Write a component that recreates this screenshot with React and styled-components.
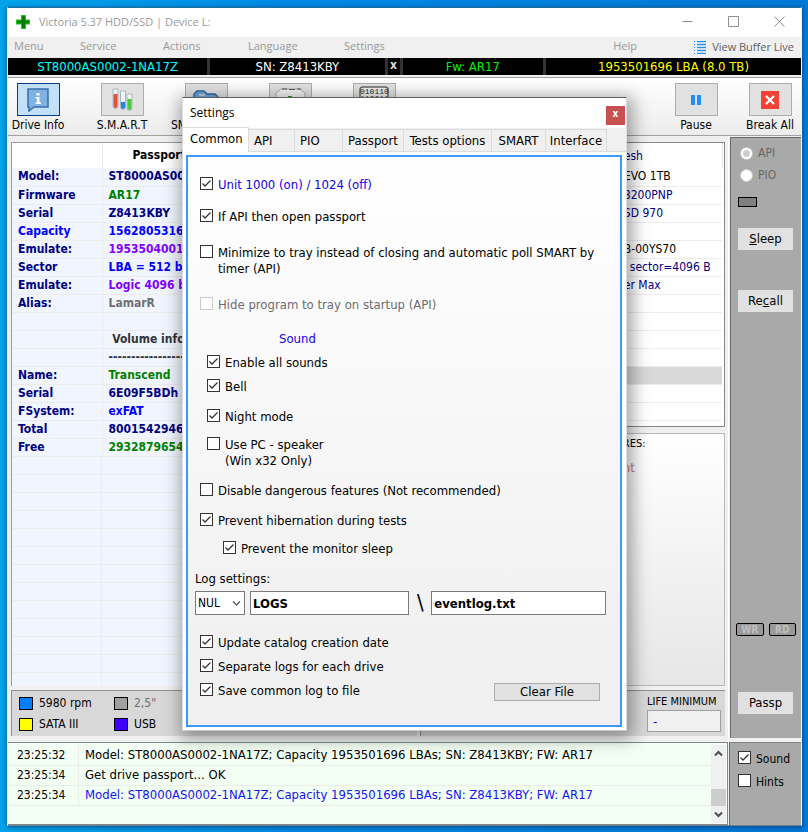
import React from 'react';
import styled, { createGlobalStyle } from 'styled-components';

const tahoma = '"DejaVu Sans Condensed", "DejaVu Sans", sans-serif';
const segoe = '"Open Sans", "Noto Sans", sans-serif';

const GlobalStyle = createGlobalStyle`
  * { box-sizing: border-box; }
  body { margin: 0; font: 13px/16px ${tahoma}; color: #000; }
  button, input, select { font: inherit; color: inherit; margin: 0; border-radius: 0; }
  table { border-collapse: collapse; }
`;

const Desktop = styled.div`
  min-height: 100vh;
  display: flex;
  padding: 7px 6px 6px 7px;
  background: linear-gradient(90deg, #00a4ea, #008be6 35%, #0078d7);
`;

const Window = styled.main`
  position: relative;
  flex: 1;
  min-width: 0;
  display: flex;
  flex-direction: column;
  background: #f0f0f0;
  border-top: 1px solid #1f6d9e;
  border-right: 1px solid #f4f4f4;
  border-bottom: 1px solid #70808a;
  border-left: 1px solid #f4f4f4;
  box-shadow: 0 1px 5px rgba(0, 30, 70, 0.6);
`;

/* title bar and menus */

const TitleBar = styled.header`
  display: flex;
  align-items: center;
  height: 29px;
  padding: 0 2px 2px 8px;
  background: #fff;
`;

const AppTitle = styled.h1`
  flex: 1;
  margin: 0 0 0 9px;
  font: 11px/16px ${segoe};
  color: #999;
`;

const WindowButtons = styled.div`
  display: flex;
  gap: 6px;
`;

const WindowButton = styled.button`
  display: grid;
  place-items: center;
  width: 40px;
  height: 27px;
  padding: 0;
  border: 0;
  background: transparent;
  color: #8f8f8f;
`;

const MenuBar = styled.nav`
  display: flex;
  align-items: center;
  height: 21px;
  padding: 0 7px 0 6px;
  font-family: ${segoe};
  font-size: 11px;
  color: #999;
`;

const MenuItem = styled.button`
  width: ${(p) => p.$width || 'auto'};
  padding: 0 0 4px;
  border: 0;
  background: transparent;
  text-align: left;
  white-space: nowrap;
`;

const MenuSpacer = styled.span`
  flex: 1;
`;

const BufferLink = styled.button`
  display: flex;
  align-items: center;
  gap: 6px;
  padding: 0 0 1px;
  border: 0;
  background: transparent;
  color: #606060;
  white-space: nowrap;
`;

const DriveStrip = styled.div`
  display: grid;
  grid-template-columns:
    minmax(0, 200fr) minmax(0, 175fr) 12px minmax(0, 141fr) minmax(0, 256fr);
  gap: 3px;
  height: 17px;
  background: #333;
`;

const DriveCell = styled.div`
  background: #000;
  color: ${(p) => p.$color};
  font-size: 13px;
  line-height: 17px;
  text-align: center;
  white-space: nowrap;
`;

const StripClose = styled.button`
  padding: 0 0 2px;
  border: 0;
  background: #000;
  color: #ddd;
  font-weight: bold;
  font-size: 12px;
  line-height: 15px;
`;

/* toolbar */

const Toolbar = styled.div`
  display: flex;
  align-items: flex-start;
  gap: 24px;
  height: 59px;
  margin-top: 2px;
  padding: 5px 1px 0 0;
  border-top: 1px solid #a0a0a0;
  border-bottom: 1px solid #a0a0a0;
  background: linear-gradient(#fff, #ececec);
`;

const ToolPair = styled.div`
  display: flex;
  gap: 14px;
  margin-left: auto;
`;

const Tool = styled.button`
  display: flex;
  flex-direction: column;
  align-items: center;
  gap: 1px;
  width: 60px;
  padding: 0;
  border: 0;
  background: transparent;
  font-size: 12px;
  white-space: nowrap;
`;

const ToolLabel = styled.span`
  width: ${(p) => (p.$start ? '70px' : 'auto')};
  text-align: left;
`;

const ToolFace = styled.span`
  display: grid;
  place-items: center;
  width: 43px;
  height: 33px;
  border: 1px solid ${(p) => (p.$active ? '#003f8a' : '#adadad')};
  background: ${(p) => (p.$active ? '#c2e0f7' : '#e1e1e1')};
`;

/* main area */

const Body = styled.div`
  flex: 1;
  display: flex;
  gap: 1px;
`;

const Main = styled.section`
  flex: 1;
  min-width: 0;
  display: flex;
  flex-direction: column;
  gap: 4px;
  padding: 6px 3px 3px;
  border-right: 1px solid #fff;
`;

const Columns = styled.div`
  flex: 1;
  display: grid;
  grid-template-columns: 410fr 303fr;
  gap: 3px;
`;

const RightColumn = styled.div`
  display: flex;
  flex-direction: column;
  gap: 6px;
  min-width: 0;
`;

const PassportPane = styled.div`
  display: flex;
  flex-direction: column;
  min-width: 0;
  overflow: hidden;
  border: 1px solid #9a9aa0;
  border-bottom: 0;
  background: #f0f5ff;
`;

const PassportTable = styled.table`
  width: 100%;
  table-layout: fixed;
  font-weight: bold;
  font-size: 12px;
  line-height: 17px;
  white-space: nowrap;

  col:first-child { width: 90px; }
  th, td { padding: 0 0 0 6px; border-right: 1px solid #ececec; text-align: left; overflow: hidden; }
  thead th { height: 25px; background: #fff; }
  thead th + th { padding-left: 30px; }
  tbody th, tbody td { height: 18px; border-bottom: 1px solid #ececec; }
`;

const Label = styled.th`
  color: ${(p) => p.$color || '#000080'};
`;

const Value = styled.td`
  color: ${(p) => p.$color};
`;

const EmptyRows = styled.div`
  flex: 1;
  background:
    linear-gradient(90deg, transparent 89px, #ececec 89px, #ececec 90px, transparent 90px),
    repeating-linear-gradient(transparent 0 17px, #ececec 17px 18px);
`;

const DrivePane = styled.div`
  overflow: hidden;
  padding-right: 1px;
  border: 1px solid #828790;
  background: #fff;
`;

const DriveTable = styled.table`
  width: 100%;
  table-layout: fixed;
  margin-bottom: 5px;
  line-height: 17px;
  font-size: 12px;
  white-space: nowrap;

  th { height: 25px; padding: 2px 0 0 200px; border-right: 1px solid #e5e5e5; color: #000080; font-weight: normal; text-align: left; }
`;

const DriveRow = styled.td`
  height: 18px;
  padding: 0 0 0 ${(p) => (p.$indent ? 206 : 200)}px;
  border-bottom: 1px solid #ececec;
  background: ${(p) => (p.$marked ? '#d9d9d9' : 'transparent')};
  color: ${(p) => (p.$dark ? '#000' : '#000080')};
`;

const FeaturePane = styled.div`
  flex: 1;
  padding: 2px 0 0 199px;
  border: 1px solid #b8b8b8;
  background: linear-gradient(#fff, #e6e6e6);
  font-size: 11px;
`;

const FeatureNote = styled.p`
  margin: 8px 0 0;
  color: #c87878;
  font-size: 13px;
`;

const Panels = styled.div`
  display: grid;
  grid-template-columns: 407fr 306fr;
  gap: 3px;
  height: 46px;
`;

const Panel = styled.div`
  display: flex;
  justify-content: ${(p) => (p.$end ? 'flex-end' : 'flex-start')};
  padding: 4px 4px 0 7px;
  border-top: 1px solid #909090;
  border-left: 1px solid #909090;
  background: #d8d8d8;
`;

const Legend = styled.ul`
  display: grid;
  grid-template-columns: 95px 95px;
  grid-auto-rows: 16px;
  row-gap: 5px;
  margin: 0;
  padding: 0;
  list-style: none;
  font-size: 12px;
`;

const LegendItem = styled.li`
  display: flex;
  align-items: center;
  gap: 6px;
  color: ${(p) => (p.$muted ? '#707070' : '#000')};
  white-space: nowrap;
`;

const Swatch = styled.span`
  width: 14px;
  height: 13px;
  border: 1px solid #000;
  background: ${(p) => p.$color};
`;

const LifeField = styled.label`
  display: flex;
  flex-direction: column;
  gap: 2px;
  padding-top: 1px;
  font-size: 11px;
  line-height: 12px;
`;

const LifeInput = styled.input`
  width: 74px;
  height: 22px;
  padding: 0 5px;
  border: 1px solid #a0a0a0;
  background: #f0f0f0;
  color: #0000e0;
  font-size: 13px;
`;

/* side panel */

const Side = styled.aside`
  display: flex;
  flex-direction: column;
  width: 71px;
  margin: 1px 0;
  padding: 7px 7px 24px;
  border-top: 1px solid #696969;
  border-left: 1px solid #696969;
  background: #a9a9a9;
  font-size: 13px;
`;

const RadioLabel = styled.label`
  display: flex;
  align-items: center;
  gap: 5px;
  margin: 0 0 6px 2px;
  color: #686868;
  font-size: 12px;
`;

const Radio = styled.input`
  appearance: none;
  width: 13px;
  height: 13px;
  border: 1px solid #ccc;
  border-radius: 50%;
  background: #fff;

  &:checked { background: radial-gradient(#ccc 0 3px, #fff 4px); }
`;

const Lamp = styled.span`
  width: 19px;
  height: 10px;
  margin: 8px 0 21px;
  border: 1px solid #000;
  background: #808080;
`;

const SideButton = styled.button`
  width: 55px;
  height: 22px;
  padding: 0;
  margin-bottom: ${(p) => p.$below || 0}px;
  border: 0;
  background: #e1e1e1;
`;

const Indicators = styled.div`
  display: flex;
  gap: 5px;
  margin: auto -2px 56px;
`;

const Indicator = styled.span`
  flex: 1;
  height: 13px;
  border: 1px solid #000;
  border-radius: 2px;
  background: #999;
  color: #c0c0c0;
  font-size: 10px;
  font-weight: bold;
  line-height: 11px;
  text-align: center;
`;

/* log */

const LogArea = styled.footer`
  display: flex;
  gap: 1px;
  height: 83px;
  margin-top: 3px;
`;

const LogPane = styled.div`
  flex: 1;
  min-width: 0;
  display: flex;
  padding: 2px 1px 1px 0;
  border: 1px solid #828790;
  border-left: 0;
  background: #f3fff3;
`;

const LogTable = styled.table`
  flex: 1;
  display: block;
  overflow: hidden;
  white-space: nowrap;

  tbody { display: block; }
`;

const LogRow = styled.tr`
  display: grid;
  grid-template-columns: 71px 1fr;
  height: 20px;
  line-height: 20px;

  td { padding: 0 0 0 6px; border-bottom: 1px solid #e8efe8; }
  td:first-child { padding-left: 9px; border-right: 1px solid #e8efe8; font-size: 12px; }
  td:last-child { color: ${(p) => (p.$link ? '#1414f0' : '#000')}; }
`;

const ScrollBar = styled.div`
  display: flex;
  flex-direction: column;
  width: 15px;
  background: #f0f0f0;
`;

const ScrollButton = styled.button`
  display: grid;
  place-items: center;
  height: 17px;
  padding: 0;
  border: 0;
  background: transparent;
  color: #505050;
`;

const ScrollThumb = styled.span`
  height: 17px;
  margin-top: auto;
  background: #cdcdcd;
`;

const LogSide = styled.div`
  display: flex;
  flex-direction: column;
  gap: 7px;
  width: 72px;
  padding: 8px 8px 0;
  border-top: 1px solid #808080;
  border-left: 1px solid #696969;
  background: #a9a9a9;
  font-size: 12px;
`;

/* settings dialog */

const Overlay = styled.div`
  position: absolute;
  inset: 89px 0 auto;
  display: flex;
  justify-content: center;
`;

const Dialog = styled.section`
  width: 445px;
  max-width: 100%;
  padding-bottom: 3px;
  border-top: 1px solid #606060;
  border-right: 1px solid #dcdcdc;
  border-bottom: 1px solid #c8c8c8;
  border-left: 1px solid #dcdcdc;
  background: #fff;
  box-shadow: 2px 4px 16px 4px rgba(0, 0, 0, 0.35);
`;

const DialogTitle = styled.header`
  display: flex;
  justify-content: space-between;
  align-items: center;
  height: 30px;
  padding-left: 7px;
`;

const DialogHeading = styled.h2`
  margin: 0;
  font: 12px/16px ${segoe};
`;

const DialogClose = styled.button`
  width: 19px;
  height: 19px;
  margin: 4px 1px 0 0;
  padding: 0 0 2px;
  border: 0;
  background: #c75050;
  color: #fff;
  font-size: 10px;
  font-weight: bold;
  line-height: 14px;
`;

const Tabs = styled.div`
  display: flex;
  align-items: flex-end;
  height: 24px;
  background: #f0f0f0;
  border-bottom: 1px solid #dcdcdc;
  font-size: 13px;
`;

const Tab = styled.button`
  width: ${(p) => p.$width}px;
  height: ${(p) => (p.$active ? 25 : 22)}px;
  margin-bottom: ${(p) => (p.$active ? -1 : 0)}px;
  padding: ${(p) => (p.$active ? '0 0 2px 7px' : p.$center ? '0' : '0 0 0 5px')};
  border: 0;
  border-top: 1px solid #dcdcdc;
  border-right: 1px solid #dcdcdc;
  background: ${(p) => (p.$active ? '#fff' : '#f0f0f0')};
  text-align: ${(p) => (p.$center ? 'center' : 'left')};
  white-space: nowrap;
`;

const TabPage = styled.form`
  display: flex;
  flex-direction: column;
  margin: 3px 4px 0 3px;
  padding: 20px 14px 24px 7px;
  border: 2px solid #3b99fc;
  background: linear-gradient(#fff, #f0f0f0 90%);
`;

const CheckRow = styled.label`
  display: flex;
  align-items: flex-start;
  gap: 5px;
  margin-left: ${(p) => p.$indent ?? 5}px;
  margin-bottom: ${(p) => p.$below ?? 8}px;
  color: ${(p) => p.$color || '#000'};
`;

const BoxCell = styled.span`
  display: grid;
  flex: none;
`;

const BoxInput = styled.input`
  appearance: none;
  grid-area: 1 / 1;
  width: 13px;
  height: 13px;
  border: 1px solid #333;
  background: #fff;

  &:disabled { border-color: #ccc; }
  & + svg { grid-area: 1 / 1; visibility: hidden; pointer-events: none; }
  &:checked + svg { visibility: visible; }
`;

const GroupTitle = styled.h3`
  margin: 0 0 8px 84px;
  font: 13px/16px ${tahoma};
  color: #1200e6;
`;

const FieldLabel = styled.label`
  margin-bottom: 4px;
`;

const PathRow = styled.div`
  display: flex;
  align-items: center;
  height: 24px;
  margin-bottom: 20px;
`;

const SelectCell = styled.span`
  display: grid;
  align-items: center;
  width: 50px;
  margin-right: 5px;

  svg { grid-area: 1 / 1; justify-self: end; margin-right: 4px; pointer-events: none; }
`;

const Select = styled.select`
  appearance: none;
  grid-area: 1 / 1;
  width: 100%;
  height: 24px;
  padding: 0 2px;
  border: 1px solid #7a7a7a;
  background: #fff;
  font-size: 12px;
`;

const PathInput = styled.input`
  flex: ${(p) => p.$grow} 1 0;
  min-width: 0;
  height: 24px;
  padding: 0 2px;
  border: 1px solid #7a7a7a;
  background: #fff;
  font-weight: bold;
`;

const Slash = styled.span`
  width: 22px;
  text-align: center;
  font-size: 22px;
  line-height: 24px;
`;

const LastRow = styled.div`
  display: flex;
  justify-content: space-between;
`;

const ClearButton = styled.button`
  width: 106px;
  height: 18px;
  margin-right: 6px;
  padding: 0;
  border: 1px solid #adadad;
  background: #e1e1e1;
  line-height: 16px;
`;

/* drawings */

const CheckMark = () => (
  <svg width="13" height="13" viewBox="0 0 13 13" fill="none" stroke="#333" strokeWidth="1.3">
    <path d="M2.5 6.5 5 9 10.5 3.5" />
  </svg>
);

const Chevron = ({ up, size = 9, weight = 1.2 }) => (
  <svg width={size} height={size} viewBox="0 0 9 9" fill="none" stroke="#505050" strokeWidth={weight}>
    <path d={up ? 'M1 6.5 4.5 3 8 6.5' : 'M1 2.5 4.5 6 8 2.5'} />
  </svg>
);

const CrossLogo = () => (
  <svg width="14" height="14" viewBox="0 0 14 14">
    <path d="M5 0h5v4.500h4v5h-4V14H5V9.500H0v-5h5z" fill="#22c322" />
    <path d="M6 1h3v4.500h4v3H9V13H6V8.500H1v-3h5z" fill="#087a08" />
  </svg>
);

const ListIcon = () => (
  <svg width="12" height="13" viewBox="0 0 12 13" stroke="#1e90f0" strokeWidth="1">
    <path d="M0 .5h1M0 3.500h1M0 6.500h1M0 9.500h1M0 12.500h1M3 .5h9M3 3.500h9M3 6.500h9M3 9.500h9M3 12.500h9" />
    <path d="M3 2h9M3 5h9M3 8h9M3 11h9" opacity=".35" />
  </svg>
);

const InfoIcon = () => (
  <svg width="23" height="24" viewBox="0 0 23 24">
    <path d="M1 1h20v18H7l-5 4v-4H1z" fill="#7fb2e5" stroke="#3a6ea8" strokeWidth="1.500" />
    <path d="M9.500 5h3v2.500h-3zM8.500 9h4v5.500h1.500V16H8.500v-1.500H10v-4H8.500z" fill="#fff" />
  </svg>
);

const TubesIcon = () => (
  <svg width="23" height="24" viewBox="0 0 23 24" stroke="#aab4c0" strokeWidth="1">
    <path d="M2 1h5v17a2.500 2.500 0 0 1-5 0z" fill="#f4f6f8" />
    <path d="M2.500 6h4v12a2 2 0 0 1-4 0z" fill="#e2503a" stroke="none" />
    <path d="M9.500 3h5v16a2.500 2.500 0 0 1-5 0z" fill="#eef5fa" />
    <path d="M10 14h4v5a2 2 0 0 1-4 0z" fill="#2a86dc" stroke="none" />
    <path d="M16 6h5v14a2.500 2.500 0 0 1-5 0z" fill="#f0faee" />
    <path d="M16.500 11h4v9a2 2 0 0 1-4 0z" fill="#4cc93a" stroke="none" />
  </svg>
);

const FolderIcon = () => (
  <svg width="26" height="20" viewBox="0 0 26 20">
    <path d="M1 19V4l3-3h7l3 3h8l3 3v12z" fill="#6fa6dc" stroke="#34689c" strokeWidth="1.500" />
    <path d="M2 8h20M6 5h6" stroke="#fff" />
  </svg>
);

const DiskIcon = () => (
  <svg width="31" height="24" viewBox="0 0 31 24">
    <path d="M1 23V5l5-4h19l5 4v18z" fill="#f2f2f2" stroke="#aaa" />
    <path d="M7 1h5M14 1.500h6M22 1h4" stroke="#555" />
    <path d="M13 8h4v4h-4z" fill="#1e9d1e" />
  </svg>
);

const BinaryIcon = () => (
  <svg width="30" height="28" viewBox="0 0 30 28">
    <rect x="1" y="1" width="28" height="26" rx="3" fill="#eee" stroke="#666" strokeWidth="1.500" />
    <g fill="#222" fontFamily="Liberation Mono, monospace" fontSize="8">
      <text x="1" y="8">010110</text>
      <text x="1" y="15">110011</text>
    </g>
  </svg>
);

const PauseIcon = () => (
  <svg width="10" height="10" viewBox="0 0 10 10" fill="#1e90f0">
    <path d="M0 0h4v10H0zM6 0h4v10H6z" />
  </svg>
);

const BreakIcon = () => (
  <svg width="18" height="18" viewBox="0 0 18 18">
    <path d="M0 0h18v18H0z" fill="#f44336" />
    <path d="M5 5l8 8M13 5l-8 8" stroke="#fff" strokeWidth="2.200" />
  </svg>
);

const GlyphIcon = ({ d }) => (
  <svg width="11" height="11" viewBox="0 0 11 11" fill="none" stroke="currentColor">
    <path d={d} />
  </svg>
);

/* data */

const passportRows = [
  ['Model:', 'ST8000AS0002-1NA17Z', '#000080'],
  ['Firmware', 'AR17', '#008000'],
  ['Serial', 'Z8413KBY', '#000080'],
  ['Capacity', '15628053168', '#0000ff', '#0000ff'],
  ['Emulate:', '1953504001', '#8000ff'],
  ['Sector', 'LBA = 512 b', '#0000ff'],
  ['Emulate:', 'Logic 4096 b', '#8000ff'],
  ['Alias:', 'LamarR', '#707070'],
  ['', '', ''],
  ['', '\u00a0Volume info', '#333'],
  ['', '------------------------', '#333'],
  ['Name:', 'Transcend', '#008000'],
  ['Serial', '6E09F5BDh', '#000080'],
  ['FSystem:', 'exFAT', '#0000ff'],
  ['Total', '8001542946', '#000080'],
  ['Free', '2932879654', '#008000'],
];

const driveRows = [
  { text: 'EVO 1TB', dark: true },
  { text: '8200PNP' },
  { text: 'SD 970' },
  { text: '' },
  { text: 'B-00YS70', dark: true },
  { text: 'sector=4096 B', indent: true },
  { text: 'er Max' },
  { text: '' },
  { text: '' },
  { text: '' },
  { text: '' },
  { text: '', marked: true },
  { text: '' },
  { text: '' },
];

const driveLine = 'Model: ST8000AS0002-1NA17Z; Capacity 1953501696 LBAs; SN: Z8413KBY; FW: AR17';

const logRows = [
  ['23:25:32', driveLine, false],
  ['23:25:34', 'Get drive passport... OK', false],
  ['23:25:34', driveLine, true],
];

const tabs = [
  ['Common', 66],
  ['API', 46],
  ['PIO', 48],
  ['Passport', 61],
  ['Tests options', 88],
  ['SMART', 54],
  ['Interface', 61],
];

const tools = [
  ['Drive Info', InfoIcon],
  ['S.M.A.R.T', TubesIcon],
  ['SM', FolderIcon],
  ['', DiskIcon],
  ['', BinaryIcon],
];

function Check({ children, checked, disabled, ...row }) {
  return (
    <CheckRow {...row}>
      <BoxCell>
        <BoxInput type="checkbox" defaultChecked={checked} disabled={disabled} />
        <CheckMark />
      </BoxCell>
      <span>{children}</span>
    </CheckRow>
  );
}

function ToolItem({ label, icon: Icon, active, start }) {
  return (
    <Tool type="button" aria-label={label || 'Tool'}>
      <ToolFace $active={active}><Icon /></ToolFace>
      <ToolLabel $start={start}>{label}</ToolLabel>
    </Tool>
  );
}

function SettingsDialog() {
  return (
    <Overlay>
      <Dialog role="dialog" aria-label="Settings">
        <DialogTitle>
          <DialogHeading>Settings</DialogHeading>
          <DialogClose type="button">x</DialogClose>
        </DialogTitle>
        <Tabs role="tablist">
          {tabs.map(([name, width], i) => (
            <Tab key={name} type="button" role="tab" $width={width} $active={i === 0} $center={i > 2}>{name}</Tab>
          ))}
        </Tabs>
        <TabPage>
          <Check checked $color="#1200e6" $below={16}>Unit 1000 (on) / 1024 (off)</Check>
          <Check checked $below={20}>If API then open passport</Check>
          <Check $below={20}>
            Minimize to tray instead of closing and automatic poll SMART by<br />timer (API)
          </Check>
          <Check disabled $color="#6d6d6d" $below={18}>Hide program to tray on startup (API)</Check>
          <GroupTitle>Sound</GroupTitle>
          <Check checked $indent={12}>Enable all sounds</Check>
          <Check checked $indent={12} $below={14}>Bell</Check>
          <Check checked $indent={12} $below={12}>Night mode</Check>
          <Check $indent={12} $below={14}>Use PC - speaker<br />(Win x32 Only)</Check>
          <Check $below={14}>Disable dangerous features (Not recommended)</Check>
          <Check checked $below={12}>Prevent hibernation during tests</Check>
          <Check checked $indent={28} $below={14}>Prevent the monitor sleep</Check>
          <FieldLabel htmlFor="log-drive">Log settings:</FieldLabel>
          <PathRow>
            <SelectCell>
              <Select id="log-drive"><option>NUL</option></Select>
              <Chevron />
            </SelectCell>
            <PathInput $grow={159} defaultValue="LOGS" aria-label="Log folder" />
            <Slash>\</Slash>
            <PathInput $grow={175} defaultValue="eventlog.txt" aria-label="Log file" />
          </PathRow>
          <Check checked>Update catalog creation date</Check>
          <Check checked>Separate logs for each drive</Check>
          <LastRow>
            <Check checked $below={0}>Save common log to file</Check>
            <ClearButton type="button">Clear File</ClearButton>
          </LastRow>
        </TabPage>
      </Dialog>
    </Overlay>
  );
}

export default function App() {
  return (
    <Desktop>
      <GlobalStyle />
      <Window>
        <TitleBar>
          <CrossLogo />
          <AppTitle>Victoria 5.37 HDD/SSD | Device L:</AppTitle>
          <WindowButtons>
            <WindowButton aria-label="Minimize"><GlyphIcon d="M.5 5.500h10" /></WindowButton>
            <WindowButton aria-label="Maximize"><GlyphIcon d="M.5.5h10v10H.5z" /></WindowButton>
            <WindowButton aria-label="Close"><GlyphIcon d="M.5.5l10 10M10.500.5l-10 10" /></WindowButton>
          </WindowButtons>
        </TitleBar>
        <MenuBar>
          <MenuItem $width="66px">Menu</MenuItem>
          <MenuItem $width="83px">Service</MenuItem>
          <MenuItem $width="85px">Actions</MenuItem>
          <MenuItem $width="96px">Language</MenuItem>
          <MenuItem>Settings</MenuItem>
          <MenuSpacer />
          <MenuItem $width="81px">Help</MenuItem>
          <BufferLink><ListIcon />View Buffer Live</BufferLink>
        </MenuBar>
        <DriveStrip>
          <DriveCell $color="#00ffff">ST8000AS0002-1NA17Z</DriveCell>
          <DriveCell $color="#fff">SN: Z8413KBY</DriveCell>
          <StripClose type="button">x</StripClose>
          <DriveCell $color="#00f000">Fw: AR17</DriveCell>
          <DriveCell $color="#ffff00">1953501696 LBA (8.0 TB)</DriveCell>
        </DriveStrip>
        <Toolbar>
          {tools.map(([label, icon], i) => (
            <ToolItem key={i} label={label} icon={icon} active={i === 0} start={i === 2} />
          ))}
          <ToolPair>
            <ToolItem label="Pause" icon={PauseIcon} />
            <ToolItem label="Break All" icon={BreakIcon} />
          </ToolPair>
        </Toolbar>
        <Body>
          <Main>
            <Columns>
              <PassportPane>
                <PassportTable>
                  <colgroup><col /><col /></colgroup>
                  <thead><tr><th /><th>Passport</th></tr></thead>
                  <tbody>
                    {passportRows.map(([name, value, color, nameColor], i) => (
                      <tr key={i}>
                        <Label $color={nameColor}>{name}</Label>
                        <Value $color={color}>{value}</Value>
                      </tr>
                    ))}
                  </tbody>
                </PassportTable>
                <EmptyRows />
              </PassportPane>
              <RightColumn>
                <DrivePane>
                  <DriveTable>
                    <thead><tr><th>esh</th></tr></thead>
                    <tbody>
                      {driveRows.map((row, i) => (
                        <tr key={i}>
                          <DriveRow $dark={row.dark} $indent={row.indent} $marked={row.marked}>{row.text}</DriveRow>
                        </tr>
                      ))}
                    </tbody>
                  </DriveTable>
                </DrivePane>
                <FeaturePane>
                  RES:
                  <FeatureNote>nt</FeatureNote>
                </FeaturePane>
              </RightColumn>
            </Columns>
            <Panels>
              <Panel>
                <Legend>
                  <LegendItem><Swatch $color="#0080ff" />5980 rpm</LegendItem>
                  <LegendItem $muted><Swatch $color="#a0a0a0" />2,5"</LegendItem>
                  <LegendItem><Swatch $color="#ffff00" />SATA III</LegendItem>
                  <LegendItem><Swatch $color="#4000ff" />USB</LegendItem>
                </Legend>
              </Panel>
              <Panel $end>
                <LifeField>LIFE MINIMUM<LifeInput defaultValue="-" /></LifeField>
              </Panel>
            </Panels>
          </Main>
          <Side>
            <RadioLabel><Radio type="radio" name="mode" defaultChecked disabled />API</RadioLabel>
            <RadioLabel><Radio type="radio" name="mode" disabled />PIO</RadioLabel>
            <Lamp />
            <SideButton $below={40}><u>S</u>leep</SideButton>
            <SideButton>Re<u>c</u>all</SideButton>
            <Indicators><Indicator>WR</Indicator><Indicator>RD</Indicator></Indicators>
            <SideButton>Passp</SideButton>
          </Side>
        </Body>
        <LogArea>
          <LogPane>
            <LogTable>
              <tbody>
                {logRows.map(([time, text, link], i) => (
                  <LogRow key={i} $link={link}>
                    <td>{time}</td>
                    <td>{text}</td>
                  </LogRow>
                ))}
              </tbody>
            </LogTable>
            <ScrollBar>
              <ScrollButton aria-label="Scroll up"><Chevron up weight={2} /></ScrollButton>
              <ScrollThumb />
              <ScrollButton aria-label="Scroll down"><Chevron weight={2} /></ScrollButton>
            </ScrollBar>
          </LogPane>
          <LogSide>
            <Check checked $indent={0} $below={0}>Sound</Check>
            <Check $indent={0} $below={0}>Hints</Check>
          </LogSide>
        </LogArea>
        <SettingsDialog />
      </Window>
    </Desktop>
  );
}
